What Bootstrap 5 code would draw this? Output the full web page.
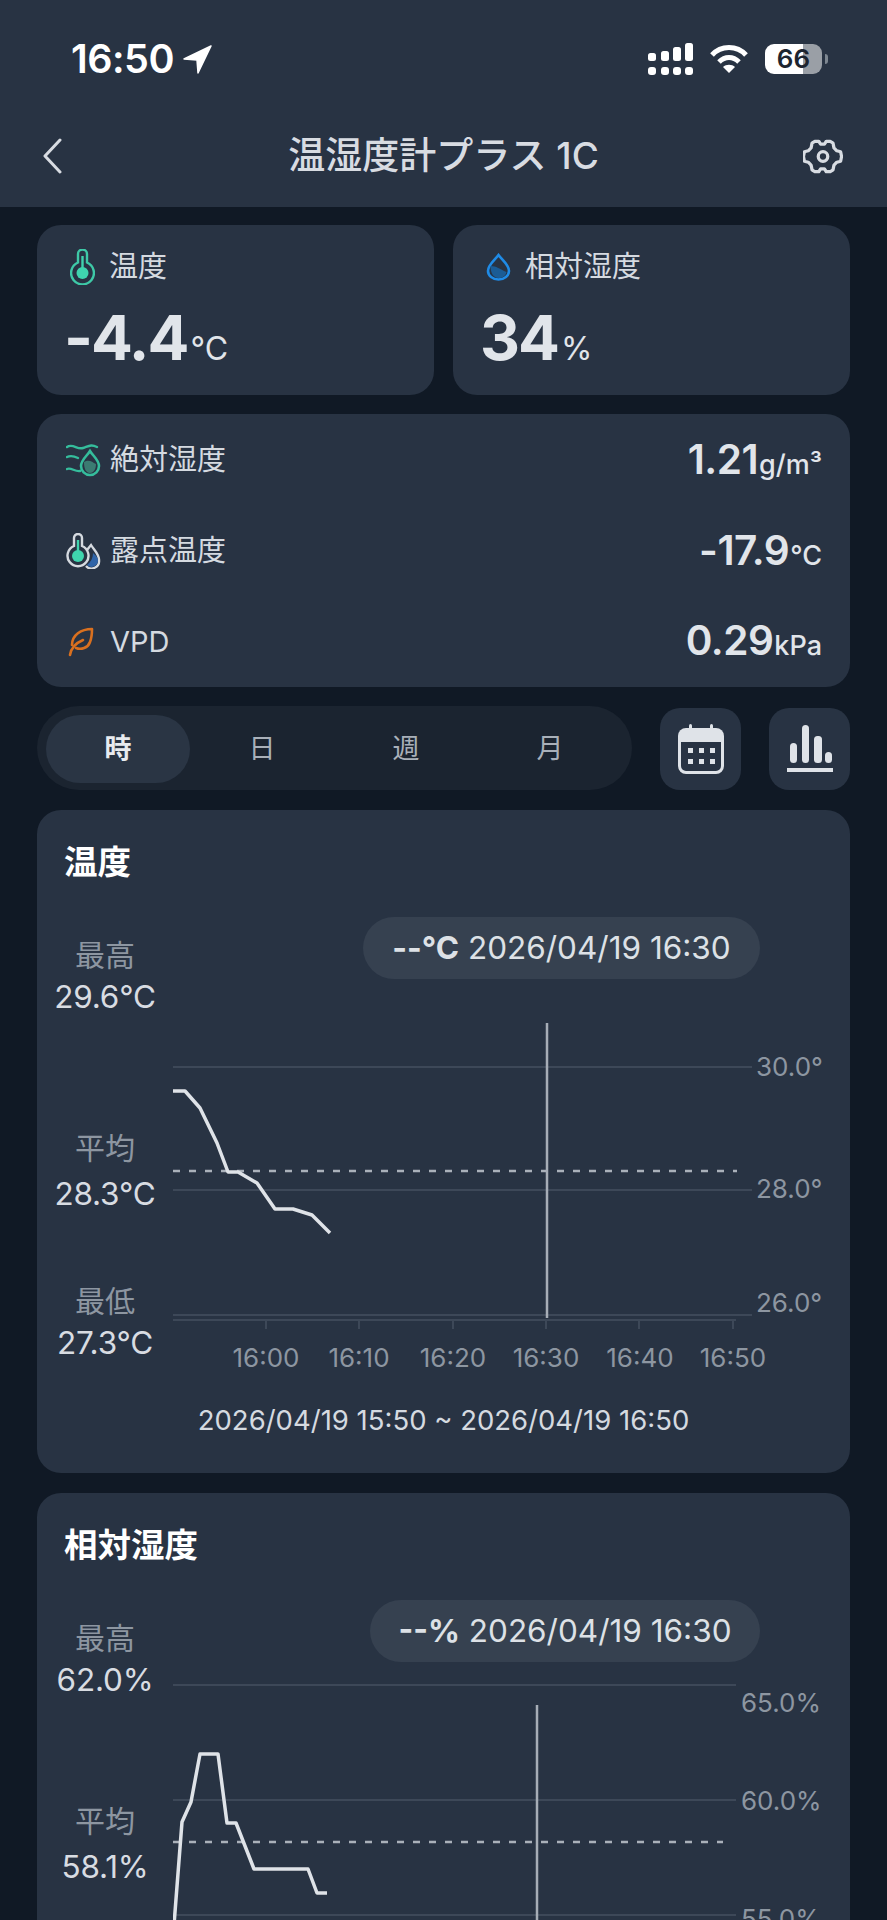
<!DOCTYPE html>
<html lang="ja">
<head>
    <meta charset="UTF-8">
    <title>温湿度計プラス 1C</title>
    <link href="https://cdn.jsdelivr.net/npm/bootstrap@5.3.2/dist/css/bootstrap.min.css" rel="stylesheet">
    <style>
        html, body { height: 1920px; overflow: hidden; }
        body {
            background: #101925;
            color: #d8dce2;
            font-family: Inter, "Noto Sans CJK JP", sans-serif;
        }
        .top-head { background: #283343; height: 207px; }
        .status-row { height: 118px; padding: 39px 59px 39px 71px; }
        .clock { font-size: 39.5px; font-weight: 600; color: #fff; line-height: 40px; letter-spacing: -.5px; }
        .title-row { height: 76px; padding: 0 44px 0 42px; position: relative; }
        .page-title { font-size: 37px; font-weight: 500; color: #d8dce2; position: absolute; left: 0; right: 0; text-align: center; line-height: 76px; margin: 0; }
        .batt { width: 57px; height: 30px; border-radius: 9px; background: linear-gradient(90deg, #fff 0 38px, #9a9fa6 38px); color: #1d2530; font-size: 26px; font-weight: 600; line-height: 30px; text-align: center; }
        .batt-nub { width: 3px; height: 10px; background: #7e8791; border-radius: 0 3px 3px 0; margin-left: 3px; }
        .main-wrap { padding: 18px 37px 0; display: flex; flex-direction: column; gap: 19px; }
        .tile-pair { display: flex; gap: 19px; }
        .panel { background: #283343; border: 0; border-radius: 24px; color: #d8dce2; }
        .tile { flex: 1 1 0; height: 170px; padding: 22px 28px 0 33px; }
        .tile-label { font-size: 29px; line-height: 40px; color: #d5dae0; gap: 14px; }
        .tile-num { font-size: 62px; font-weight: 700; line-height: 70px; margin: 16px 0 0 -6px; color: #e1e5ea; letter-spacing: -2px; }
        .tile-unit { font-size: 32px; font-weight: 400; letter-spacing: 0; margin-left: 3px; }
        .metric-box { height: 273px; padding: 1px 28px 0 29px; }
        .metric-row { height: 91px; }
        .metric-name { font-size: 29px; color: #d5dae0; line-height: 40px; }
        .metric-num { font-size: 40.5px; font-weight: 600; color: #e1e5ea; letter-spacing: -.5px; }
        .metric-unit { font-size: 27px; font-weight: 500; letter-spacing: 0; margin-left: 1px; }
        .seg-row { margin-bottom: 1px; }
        .seg-box { width: 595px; height: 84px; border-radius: 42px; background: #1b2430; padding: 9px 10px 7px 9px; }
        .seg-item { flex: 1 1 0; border-radius: 34px; font-size: 27px; color: #a9b0b9; display: flex; align-items: center; justify-content: center; }
        .seg-item.on { background: #2a3544; color: #e8ebef; font-weight: 700; }
        .tool-btn { width: 81px; height: 82px; border-radius: 20px; background: #283343; margin-top: 2px; }
        .tool-btn.cal { margin-right: 28px; }
        .chart-card { height: 663px; padding-top: 31px; margin-bottom: 1px; }
        .chart-card.second { height: 600px; }
        .chart-name { font-size: 33.5px; font-weight: 700; line-height: 42px; color: #fff; margin: 0 0 34px 27px; }
        .stat-col { width: 136px; text-align: center; line-height: 40px; flex: none; padding-top: 18px; }
        .stat-name { color: #8d96a1; font-size: 30px; }
        .stat-val { color: #d8dce2; font-size: 31.5px; letter-spacing: -.2px; margin-top: 2px; }
        .gap-one { margin-top: 111px; }
        .gap-two { margin-top: 67px; }
        .gap-three { margin-top: 101px; }
        .gap-one + .stat-val, .gap-three + .stat-val { margin-top: 6px; }
        .read-pill { background: #364150; border-radius: 31px; height: 62px; width: 397px; margin: 0 90px 0 auto; font-size: 31.5px; line-height: 62px; text-align: center; color: #dde1e6; }
        .read-pill.narrow { width: 390px; }
        .read-pill b { font-weight: 700; }
        .plot { display: block; width: 677px; }
        .plot text { font-family: Inter, sans-serif; font-size: 26px; fill: #8d96a1; }
        .range-line { text-align: center; font-size: 27.5px; color: #d5dae0; line-height: 36px; margin-top: 17px; }
    </style>
</head>
<body>
    <div class="top-head">
        <div class="status-row d-flex justify-content-between align-items-center">
            <div class="d-flex align-items-center gap-2">
                <span class="clock">16:50</span>
                <svg width="31" height="31" viewBox="0 0 31 31"><path d="M29 2 2 15l13 1 1 13z" fill="#fff" stroke="#fff" stroke-width="1.5" stroke-linejoin="round"/></svg>
            </div>
            <div class="d-flex align-items-center">
                <svg width="45" height="32" viewBox="0 0 45 32" fill="#fff" class="me-3">
                    <rect x="0" y="10" width="8" height="8" rx="2.5"/><rect x="13" y="8" width="8" height="10" rx="2.5"/><rect x="25" y="4" width="8" height="14" rx="2.5"/><rect x="37" y="0" width="8" height="18" rx="2.5"/>
                    <rect x="0" y="24" width="8" height="8" rx="3"/><rect x="13" y="24" width="8" height="8" rx="3"/><rect x="25" y="24" width="8" height="8" rx="3"/><rect x="37" y="24" width="8" height="8" rx="3"/>
                </svg>
                <svg width="40" height="30" viewBox="0 0 40 30" class="me-3" fill="none" stroke="#fff" stroke-width="5">
                    <path d="M3 11C12 1 28 1 37 11"/><path d="M10 18c6-6 14-6 20 0"/><path d="M20 29l-6-6c3-3 9-3 12 0z" fill="#fff" stroke="none"/>
                </svg>
                <div class="batt">66</div>
                <div class="batt-nub"></div>
            </div>
        </div>
        <div class="title-row d-flex justify-content-between align-items-center">
            <h1 class="page-title">温湿度計プラス 1C</h1>
            <svg width="20" height="36" viewBox="0 0 20 36" fill="none" stroke="#d8dce2" stroke-width="3" stroke-linecap="round" stroke-linejoin="round" class="position-relative"><path d="M18 2 3 18l15 16"/></svg>
            <svg width="40" height="37" viewBox="0 0 42 38" fill="none" stroke="#d8dce2" stroke-width="3.4" stroke-linejoin="round" class="position-relative">
                <path d="M13 3h4l2 3h4l2-3h4l3 2 1 5 3 3 4 1 1 5-1 5-4 1-3 3-1 5-3 2h-4l-2-3h-4l-2 3h-4l-3-2-1-5-3-3-4-1-1-5 1-5 4-1 3-3 1-5z" transform="translate(-.5 0)"/>
                <circle cx="21" cy="19" r="5"/>
            </svg>
        </div>
    </div>

    <div class="main-wrap">
        <div class="tile-pair">
            <div class="panel tile">
                <div class="d-flex align-items-center tile-label">
                    <svg width="25" height="36" viewBox="0 0 25 36" fill="none"><path d="M8 13.5V5a4.5 4.5 0 0 1 9 0v8.5a11.4 11.4 0 1 1-9 0z" stroke="#3ec9a7" stroke-width="2.4"/><circle cx="12.5" cy="24" r="6" fill="#3fd4ae"/><path d="M12.5 7v15" stroke="#3fd4ae" stroke-width="2.4"/></svg>
                    <span>温度</span>
                </div>
                <div class="tile-num">-4.4<span class="tile-unit">°C</span></div>
            </div>
            <div class="panel tile">
                <div class="d-flex align-items-center tile-label">
                    <svg width="25" height="28" viewBox="0 0 25 28" fill="none"><path d="M12.5 2C8 8 2 12 2 18a10.5 8.5 0 0 0 21 0C23 12 17 8 12.5 2z" stroke="#1f8be6" stroke-width="2.6"/><path d="M4.5 13c6 0 9 3 16 6-1 4-4 6-8 6-5 0-8-5-8-12z" fill="#1b5c95"/></svg>
                    <span>相対湿度</span>
                </div>
                <div class="tile-num">34<span class="tile-unit">%</span></div>
            </div>
        </div>

        <div class="panel metric-box d-flex flex-column justify-content-center">
            <div class="metric-row d-flex justify-content-between align-items-center">
                <div class="d-flex align-items-center metric-name gap-2">
                    <svg width="36" height="34" viewBox="0 0 36 34" fill="none" stroke="#35bd9c" stroke-width="2.4" stroke-linecap="round"><path d="M1 4c6-4 10 3 16 1s8-4 14-1"/><path d="M1 14c4-2 7-1 11 1"/><path d="M1 26c4-2 8 3 13 2"/><path d="M24 8c-3 5-9 9-9 15a9 9 0 0 0 18 0c0-6-6-10-9-15z" stroke-width="2.6"/><path d="M18 19c5-3 8 0 12 2 0 6-3 9-6 9-4 0-6-4-6-11z" fill="#3b7c72" stroke="none"/></svg>
                    <span>絶対湿度</span>
                </div>
                <div class="metric-num">1.21<span class="metric-unit">g/m³</span></div>
            </div>
            <div class="metric-row d-flex justify-content-between align-items-center">
                <div class="d-flex align-items-center metric-name gap-2">
                    <svg width="36" height="36" viewBox="0 0 36 36" fill="none" stroke="#d5dae0" stroke-width="2.4"><path d="M8 13V5a4 4 0 0 1 8 0v8a10.5 10.5 0 1 1-8 0z"/><circle cx="12" cy="23" r="6" fill="#3fd4ae" stroke="none"/><path d="M12 7v14" stroke="#3fd4ae"/><path d="M21 17l4-5c3 5 8 9 8 15a7.500 7.500 0 0 1-13 6"/><path d="M27 20c2 2 5 4 5 7a6.500 6.500 0 0 1-11 5c4-3 6-7 6-12z" fill="#2f64a8" stroke="none"/></svg>
                    <span>露点温度</span>
                </div>
                <div class="metric-num">-17.9<span class="metric-unit">°C</span></div>
            </div>
            <div class="metric-row d-flex justify-content-between align-items-center">
                <div class="d-flex align-items-center metric-name gap-2">
                    <svg width="36" height="30" viewBox="0 0 36 30" fill="none" stroke="#d9701f" stroke-width="2.6" stroke-linecap="round" stroke-linejoin="round"><path d="M6 18C6 8 15 2 26 2c0 3 0 8-2 13-2 6-9 8-14 6"/><path d="M4 28c1-7 6-12 13-15"/></svg>
                    <span>VPD</span>
                </div>
                <div class="metric-num">0.29<span class="metric-unit">kPa</span></div>
            </div>
        </div>

        <div class="d-flex seg-row">
            <div class="seg-box d-flex">
                <div class="seg-item on">時</div>
                <div class="seg-item">日</div>
                <div class="seg-item">週</div>
                <div class="seg-item">月</div>
            </div>
            <div class="tool-btn cal d-flex align-items-center justify-content-center ms-auto">
                <svg width="46" height="50" viewBox="0 0 46 50" fill="#dfe3e8"><rect x="11" y="0" width="3" height="7" rx="1.5"/><rect x="32" y="0" width="3" height="7" rx="1.5"/><path d="M8 4h30a8 8 0 0 1 8 8v6H0v-6a8 8 0 0 1 8-8z"/><path d="M1.5 18v24a6.5 6.5 0 0 0 6.5 6.5h30a6.5 6.5 0 0 0 6.5-6.5V18" fill="none" stroke="#dfe3e8" stroke-width="3"/><rect x="10" y="24" width="5" height="5"/><rect x="21" y="24" width="5" height="5"/><rect x="32" y="24" width="5" height="5"/><rect x="10" y="35" width="5" height="5"/><rect x="21" y="35" width="5" height="5"/><rect x="32" y="35" width="5" height="5"/></svg>
            </div>
            <div class="tool-btn d-flex align-items-center justify-content-center">
                <svg width="46" height="48" viewBox="0 0 46 48" fill="#dfe3e8"><rect x="3" y="18" width="7" height="20" rx="3.5"/><rect x="15" y="0" width="7" height="38" rx="3.5"/><rect x="27" y="11" width="8" height="27" rx="3.5"/><rect x="38" y="27" width="7" height="11" rx="3.5"/><rect x="0" y="43" width="46" height="4"/></svg>
            </div>
        </div>

        <div class="panel chart-card">
            <h2 class="chart-name">温度</h2>
            <div class="d-flex">
                <div class="stat-col">
                    <div class="stat-name">最高</div>
                    <div class="stat-val">29.6°C</div>
                    <div class="stat-name gap-one">平均</div>
                    <div class="stat-val">28.3°C</div>
                    <div class="stat-name gap-two">最低</div>
                    <div class="stat-val">27.3°C</div>
                </div>
                <div class="flex-grow-1">
                    <div class="read-pill"><b>--°C</b> 2026/04/19 16:30</div>
                    <svg class="plot" viewBox="173 979 677 406" height="406">
                        <g stroke="#3d4858" stroke-width="2">
                            <path d="M173 1067H752M173 1190H752M173 1315H752M173 1320H736"/>
                            <path d="M266 1320v9M359 1320v9M453 1320v9M546 1320v9M639 1320v9M733 1320v9"/>
                        </g>
                        <path d="M173 1171H737" stroke="#aab1ba" stroke-width="2.5" stroke-dasharray="7 9"/>
                        <path d="M547 1023V1318" stroke="#a6adb6" stroke-width="2.5"/>
                        <polyline points="173,1091 185,1091 200,1108 217,1143 228,1172 238,1172 257,1183 275,1209 293,1209 312,1215 330,1233" fill="none" stroke="#dfe3e8" stroke-width="3.5" stroke-linejoin="round"/>
                        <text x="756" y="1076">30.0°</text>
                        <text x="756" y="1198">28.0°</text>
                        <text x="756" y="1312">26.0°</text>
                        <g text-anchor="middle">
                            <text x="266" y="1367">16:00</text>
                            <text x="359" y="1367">16:10</text>
                            <text x="453" y="1367">16:20</text>
                            <text x="546" y="1367">16:30</text>
                            <text x="640" y="1367">16:40</text>
                            <text x="733" y="1367">16:50</text>
                        </g>
                    </svg>
                </div>
            </div>
            <div class="range-line">2026/04/19 15:50 ~ 2026/04/19 16:50</div>
        </div>

        <div class="panel chart-card second">
            <h2 class="chart-name">相対湿度</h2>
            <div class="d-flex">
                <div class="stat-col">
                    <div class="stat-name">最高</div>
                    <div class="stat-val">62.0%</div>
                    <div class="stat-name gap-three">平均</div>
                    <div class="stat-val">58.1%</div>
                </div>
                <div class="flex-grow-1">
                    <div class="read-pill narrow"><b>--%</b> 2026/04/19 16:30</div>
                    <svg class="plot" viewBox="173 1662 677 300" height="300">
                        <path d="M173 1685H736M173 1800H736M173 1915H736" stroke="#3d4858" stroke-width="2"/>
                        <path d="M173 1842H723" stroke="#aab1ba" stroke-width="2.5" stroke-dasharray="7 9"/>
                        <path d="M537 1705V1960" stroke="#a6adb6" stroke-width="2.5"/>
                        <polyline points="174,1925 182,1822 191,1802 200,1754 218,1754 227,1823 236,1823 254,1869 308,1869 317,1893 327,1893" fill="none" stroke="#dfe3e8" stroke-width="3.5" stroke-linejoin="round"/>
                        <text x="741" y="1712">65.0%</text>
                        <text x="741" y="1810">60.0%</text>
                        <text x="741" y="1928">55.0%</text>
                    </svg>
                </div>
            </div>
        </div>
    </div>
    <script src="https://cdn.jsdelivr.net/npm/bootstrap@5.3.2/dist/js/bootstrap.bundle.min.js"></script>
</body>
</html>
